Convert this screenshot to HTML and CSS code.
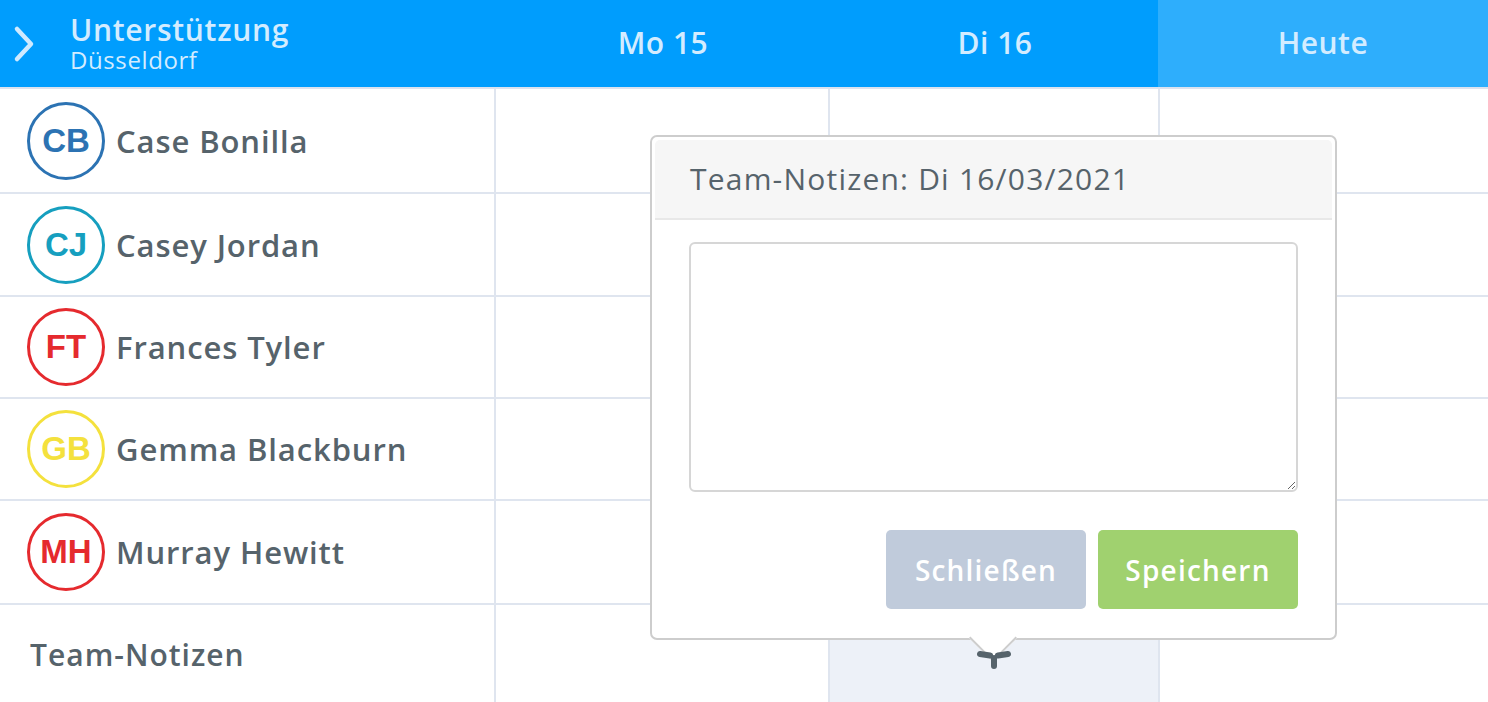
FILE: index.html
```html
<!DOCTYPE html>
<html lang="de">
<head>
    <meta charset="UTF-8">
    <title>Dienstplan Unterstützung</title>
    <link rel="stylesheet" href="styles.css">
</head>
<body>
    <div class="board">
        <!-- Header row -->
        <div class="head head-team">
            <svg class="chevron" width="24" height="40" viewBox="0 0 24 40">
                <path d="M5 5 L19 20 L5 35" fill="none" stroke="#cfeaff" stroke-width="4.5" stroke-linecap="round" stroke-linejoin="round"/>
            </svg>
            <div class="team-name">
                <div class="team-title">Unterstützung</div>
                <div class="team-city">Düsseldorf</div>
            </div>
        </div>
        <div class="head head-day">Mo 15</div>
        <div class="head head-day">Di 16</div>
        <div class="head head-day today">Heute</div>

        <!-- Employees -->
        <div class="person"><span class="avatar blue">CB</span>Case Bonilla</div>
        <div class="cell"></div><div class="cell"></div><div class="cell last"></div>

        <div class="person"><span class="avatar teal">CJ</span>Casey Jordan</div>
        <div class="cell"></div><div class="cell"></div><div class="cell last"></div>

        <div class="person"><span class="avatar red">FT</span>Frances Tyler</div>
        <div class="cell"></div><div class="cell"></div><div class="cell last"></div>

        <div class="person"><span class="avatar yellow">GB</span>Gemma Blackburn</div>
        <div class="cell"></div><div class="cell"></div><div class="cell last"></div>

        <div class="person"><span class="avatar red">MH</span>Murray Hewitt</div>
        <div class="cell"></div><div class="cell"></div><div class="cell last"></div>

        <!-- Team notes row -->
        <div class="person notes-label">Team-Notizen</div>
        <div class="cell bottom"></div>
        <div class="cell bottom active">
            <svg class="note-icon" width="40" height="26" viewBox="0 0 40 26">
                <path d="M6 5 L16 6.5 M34 5 L24 6.5 M20 9 L20 17" fill="none" stroke="#56636b" stroke-width="6" stroke-linecap="round"/>
            </svg>
        </div>
        <div class="cell bottom last"></div>
    </div>

    <!-- Popover for team notes -->
    <div class="popover">
        <div class="popover-head">Team-Notizen: Di 16/03/2021</div>
        <div class="popover-body">
            <textarea class="note-input"></textarea>
            <div class="popover-actions">
                <button class="btn btn-close">Schließen</button>
                <button class="btn btn-save">Speichern</button>
            </div>
        </div>
        <div class="popover-arrow"></div>
    </div>
</body>
</html>
```

FILE: styles.css
```css
body {
    margin: 0;
    font-family: "Open Sans", "Liberation Sans", sans-serif;
    color: #56636b;
    background-color: #fff;
    overflow: hidden;
}

.board {
    display: grid;
    grid-template-columns: 496px 334px 330px 1fr;
    grid-template-rows: 89px 105px 103px 102px 102px 104px 97px;
    height: 702px;
}

/* header */
.head {
    background-color: #009dfd;
    border-bottom: 2px solid #dce3ef;
    color: #d3ecff;
    display: flex;
    align-items: center;
}

.head-team {
    padding-left: 12px;
}

.chevron {
    margin-right: 34px;
}

.team-name {
    display: flex;
    flex-direction: column;
    gap: 2px;
}

.team-title {
    font-size: 30px;
    font-weight: 600;
    line-height: 30px;
    letter-spacing: 0.7px;
}

.team-city {
    font-size: 24px;
    line-height: 26px;
    letter-spacing: 0.6px;
}

.head-day {
    justify-content: center;
    font-size: 30px;
    font-weight: 600;
    letter-spacing: 0.5px;
    padding-bottom: 2px;
}

.head-day.today {
    background-color: #2eaefc;
    margin-left: -2px;
}

/* rows */
.person {
    display: flex;
    align-items: center;
    padding-left: 27px;
    font-size: 31px;
    font-weight: 600;
    letter-spacing: 0.9px;
    border-right: 2px solid #dfe5ef;
    border-bottom: 2px solid #dfe5ef;
}

.cell {
    border-right: 2px solid #dfe5ef;
    border-bottom: 2px solid #dfe5ef;
}

.cell.last {
    border-right: 0;
}

.cell.bottom,
.notes-label {
    border-bottom: 0;
}

.notes-label {
    padding-left: 30px;
    padding-top: 2px;
    font-size: 30px;
    letter-spacing: 1px;
}

.cell.active {
    background-color: #edf1f8;
    display: flex;
    justify-content: center;
    padding-top: 44px;
}

.note-icon {
    position: relative;
    z-index: 2;
}

.avatar {
    width: 72px;
    height: 72px;
    border: 3px solid;
    border-radius: 50%;
    display: flex;
    align-items: center;
    justify-content: center;
    font-family: "Liberation Sans", Arial, sans-serif;
    font-weight: bold;
    font-size: 33px;
    letter-spacing: 0;
    margin-right: 11px;
    flex-shrink: 0;
}

.avatar.blue { color: #2c73b3; border-color: #2c73b3; }
.avatar.teal { color: #169fbf; border-color: #169fbf; }
.avatar.red { color: #e52a2e; border-color: #e52a2e; }
.avatar.yellow { color: #f4e13d; border-color: #f4e13d; }

/* popover */
.popover {
    position: absolute;
    z-index: 1;
    left: 650px;
    top: 135px;
    width: 677px;
    height: 498px;
    background-color: #fff;
    border: 2px solid #cdcdcd;
    border-radius: 7px;
    padding: 3px 3px 0;
}

.popover-head {
    background-color: #f6f6f6;
    border-bottom: 2px solid #e8e8e8;
    border-radius: 5px 5px 0 0;
    height: 78px;
    padding-left: 35px;
    font-size: 30px;
    line-height: 78px;
    letter-spacing: 1.2px;
}

.popover-body {
    padding: 22px 34px 0 34px;
}

.note-input {
    display: block;
    box-sizing: border-box;
    width: 609px;
    height: 250px;
    border: 2px solid #d6d6d6;
    border-radius: 6px;
    font-family: inherit;
    font-size: 20px;
    resize: vertical;
}

.popover-actions {
    display: flex;
    justify-content: flex-end;
    gap: 12px;
    margin-top: 38px;
}

.btn {
    width: 200px;
    height: 79px;
    border: none;
    border-radius: 5px;
    color: #fff;
    font-family: inherit;
    font-size: 28px;
    font-weight: 600;
    letter-spacing: 1.2px;
}

.btn-close {
    background-color: #c0cbdb;
}

.btn-save {
    background-color: #a0d16f;
}

.popover-arrow {
    position: absolute;
    left: 324px;
    bottom: -17px;
    width: 32px;
    height: 32px;
    background-color: #fff;
    border-right: 2px solid #cdcdcd;
    border-bottom: 2px solid #cdcdcd;
    transform: rotate(45deg);
}
```
